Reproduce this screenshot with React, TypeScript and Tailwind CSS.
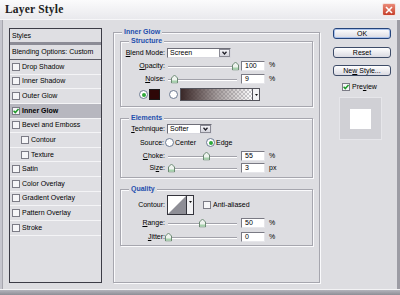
import React from 'react';

type Item = { label: string; checked?: boolean; active?: boolean; indent?: boolean };

const styleItems: Item[] = [
    { label: 'Drop Shadow' },
    { label: 'Inner Shadow' },
    { label: 'Outer Glow' },
    { label: 'Inner Glow', checked: true, active: true },
    { label: 'Bevel and Emboss' },
    { label: 'Contour', indent: true },
    { label: 'Texture', indent: true },
    { label: 'Satin' },
    { label: 'Color Overlay' },
    { label: 'Gradient Overlay' },
    { label: 'Pattern Overlay' },
    { label: 'Stroke' },
];

function Checkbox({ checked }: { checked?: boolean }) {
    return (
        <span className="w-[8px] h-[8px] shrink-0 border border-[#7c7c86] bg-[#f6f6f8] flex items-center justify-center">
            {checked && (
                <svg width="6" height="6" viewBox="0 0 6 6">
                    <path d="M0.6 2.8 L2.3 4.6 L5.5 0.9" stroke="#1f9a2a" strokeWidth="1.5" fill="none" />
                </svg>
            )}
        </span>
    );
}

function Radio({ checked }: { checked?: boolean }) {
    return (
        <span className="w-[9px] h-[9px] shrink-0 rounded-full border border-[#6c7a92] bg-white flex items-center justify-center">
            {checked && <span className="w-[4px] h-[4px] rounded-full bg-[#2fa83a]" />}
        </span>
    );
}

function Slider({ thumb }: { thumb: number }) {
    return (
        <div className="relative w-[69px] h-full shrink-0">
            <div className="absolute left-0 right-0 top-1/2 h-[1px] bg-[#a2a2aa] shadow-[0_1px_0_#ffffff]" />
            <svg
                className="absolute top-1/2 -translate-y-1/2"
                style={{ left: thumb }}
                width="7"
                height="9"
                viewBox="0 0 7 9"
            >
                <path d="M0.5 8.5 V3.5 L3.5 0.5 L6.5 3.5 V8.5 Z" fill="#eef3ee" stroke="#6d8a74" />
                <rect x="1" y="6" width="5" height="2" fill="#a6d2ac" />
            </svg>
        </div>
    );
}

function NumBox({ value }: { value: string }) {
    return (
        <div className="w-[24px] h-[10px] shrink-0 bg-white border border-[#7a7a84] border-r-[#e6e6ea] border-b-[#e6e6ea] text-[7px] leading-[8px] pl-[3px]">
            {value}
        </div>
    );
}

function Select({ text, width }: { text: string; width: string }) {
    return (
        <div className={`${width} h-[10px] shrink-0 flex bg-white border border-[#6e6e78] border-r-[#d8d8de] border-b-[#d8d8de]`}>
            <span className="flex-1 text-[7px] leading-[8px] pl-[2px]">{text}</span>
            <span className="w-[11px] h-full border border-[#8a8a94] bg-linear-to-b from-[#f4f4f8] to-[#d4d4dc] flex items-center justify-center">
                <svg width="5" height="4" viewBox="0 0 5 4">
                    <path d="M0.5 0.8 L2.5 3 L4.5 0.8" stroke="#202028" strokeWidth="1.3" fill="none" />
                </svg>
            </span>
        </div>
    );
}

function Group({ title, className, children }: { title: string; className: string; children?: React.ReactNode }) {
    return (
        <div className={`relative border border-[#a6a6ae] shadow-[inset_1px_1px_0_#fafafc,1px_1px_0_#fafafc] ${className}`}>
            <span className="absolute -top-[5px] left-[8px] px-[2px] bg-[#dddde1] text-[#1e4fae] font-bold text-[7px] leading-[8px]">
                {title}
            </span>
            {children}
        </div>
    );
}

function Label({ children, w = 'w-[44px]' }: { children: React.ReactNode; w?: string }) {
    return <span className={`${w} shrink-0 text-right text-[7px] leading-[8px]`}>{children}</span>;
}

function Button({ children, primary }: { children: React.ReactNode; primary?: boolean }) {
    return (
        <div
            className={`h-[11px] rounded-[3px] border bg-linear-to-b from-white to-[#dadae2] text-[7px] leading-[9px] text-center ${primary
                ? 'border-[#24447c] shadow-[inset_0_0_0_1px_#a9c1ea]'
                : 'border-[#3e4c68]'
                }`}
        >
            {children}
        </div>
    );
}

export default function App() {
    return (
        <div className="w-[400px] h-[295px] flex flex-col bg-[#a0a0a8] text-black font-['Liberation_Sans',Arial,sans-serif] overflow-hidden">
            {/* Title bar */}
            <div className="h-[20px] shrink-0 flex items-center justify-between bg-linear-to-b from-[#fbfbfc] to-[#e9e9ed] border-b border-[#f6f6f8]">
                <span className="pl-[5px] pt-[1px] font-['Liberation_Serif',serif] font-bold text-[11.5px] tracking-[0.2px] text-[#202020]">
                    Layer Style
                </span>
                <div className="mr-[4px] w-[14px] h-[13px] rounded-[2px] border border-[#f4e4e0] bg-linear-to-b from-[#ea8a78] to-[#c63e2a] flex items-center justify-center">
                    <svg width="8" height="8" viewBox="0 0 8 8">
                        <path d="M1 1 L7 7 M7 1 L1 7" stroke="#ffffff" strokeWidth="1.6" />
                    </svg>
                </div>
            </div>

            <div className="flex flex-1">
                <div className="w-[3px] bg-[#c6c6ce] border-r border-[#a6a6ae]" />
                <div className="flex-1 flex items-start bg-[#dddde1]">
                    {/* Styles list */}
                    <div className="ml-[6px] mt-[8px] w-[93px] h-[255px] border border-[#3c3c46] bg-[#dfdfe3] text-[7px] leading-[8px]">
                        <div className="h-[13px] flex items-center pl-[2px]">Styles</div>
                        <div className="h-[3px] bg-[#8c8c96]" />
                        <div className="h-[15px] flex items-center pl-[2px] border-b border-[#5e5e68]">Blending Options: Custom</div>
                        {styleItems.map(item => (
                            <div
                                key={item.label}
                                className={`h-[14.64px] flex items-center gap-[2px] border-b border-[#f4f4f6] ${item.indent ? 'pl-[11px]' : 'pl-[2px]'} ${item.active ? 'bg-[#b7b7bf] font-bold' : ''}`}
                            >
                                <Checkbox checked={item.checked} />
                                <span>{item.label}</span>
                            </div>
                        ))}
                    </div>

                    {/* Inner Glow group */}
                    <Group title="Inner Glow" className="ml-[11px] mt-[12px] w-[207px] h-[251px] pl-[6px] pt-[8px]">
                        <Group title="Structure" className="w-[193px] h-[66px] pt-[5px]">
                            <div className="h-[12px] flex items-center">
                                <Label><u>B</u>lend Mode:</Label>
                                <div className="ml-[2px]"><Select text="Screen" width="w-[64px]" /></div>
                            </div>
                            <div className="h-[13px] flex items-center text-[7px]">
                                <Label><u>O</u>pacity:</Label>
                                <div className="ml-[3px] h-full"><Slider thumb={64} /></div>
                                <div className="ml-[4px]"><NumBox value="100" /></div>
                                <span className="ml-[4px]">%</span>
                            </div>
                            <div className="h-[14px] flex items-center text-[7px]">
                                <Label><u>N</u>oise:</Label>
                                <div className="ml-[3px] h-full"><Slider thumb={3} /></div>
                                <div className="ml-[4px]"><NumBox value="9" /></div>
                                <span className="ml-[4px]">%</span>
                            </div>
                            <div className="h-[17px] flex items-center pl-[18px]">
                                <Radio checked />
                                <div className="ml-[1px] w-[11px] h-[11px] bg-[#2e0707] border border-[#1a1a1a]" />
                                <div className="ml-[9px]"><Radio /></div>
                                <div className="ml-[2px] w-[80px] h-[13px] flex border border-[#54545c]">
                                    <div className="flex-1 bg-[repeating-conic-gradient(#cdcdd0_0_25%,#ffffff_0_50%)] bg-[length:4px_4px]">
                                        <div className="w-full h-full bg-linear-to-r from-[#3a2828] via-[#7a6e6e]/70 to-transparent" />
                                    </div>
                                    <div className="w-[7px] bg-[#f2f2f4] border-l border-[#54545c] flex items-center justify-center">
                                        <svg width="3" height="2" viewBox="0 0 3 2">
                                            <path d="M0 0 H3 L1.5 2 Z" fill="#101010" />
                                        </svg>
                                    </div>
                                </div>
                            </div>
                        </Group>

                        <Group title="Elements" className="mt-[11px] w-[193px] h-[60px] pt-[4px]">
                            <div className="h-[12px] flex items-center">
                                <Label><u>T</u>echnique:</Label>
                                <div className="ml-[2px]"><Select text="Softer" width="w-[45px]" /></div>
                            </div>
                            <div className="h-[15px] flex items-center text-[7px] leading-[8px]">
                                <Label w="w-[43px]">Source:</Label>
                                <div className="ml-[1px]"><Radio /></div>
                                <span className="ml-[1px] w-[31px]">Center</span>
                                <Radio checked />
                                <span className="ml-[1px]">Edge</span>
                            </div>
                            <div className="h-[12px] flex items-center text-[7px]">
                                <Label><u>C</u>hoke:</Label>
                                <div className="ml-[3px] h-full"><Slider thumb={35} /></div>
                                <div className="ml-[4px]"><NumBox value="55" /></div>
                                <span className="ml-[4px]">%</span>
                            </div>
                            <div className="h-[12px] flex items-center text-[7px]">
                                <Label>Si<u>z</u>e:</Label>
                                <div className="ml-[3px] h-full"><Slider thumb={0} /></div>
                                <div className="ml-[4px]"><NumBox value="3" /></div>
                                <span className="ml-[4px]">px</span>
                            </div>
                        </Group>

                        <Group title="Quality" className="mt-[11px] w-[193px] h-[57px] pt-[4px]">
                            <div className="h-[22px] flex items-center text-[7px] leading-[8px]">
                                <Label>Contour:</Label>
                                <div className="ml-[2px] w-[27px] h-[20px] flex border border-[#34343c] bg-white">
                                    <svg className="flex-1" width="19" height="18" viewBox="0 0 19 18" preserveAspectRatio="none">
                                        <polygon points="0,18 19,0 19,18" fill="#8e8e96" />
                                    </svg>
                                    <div className="w-[7px] bg-[#f2f2f4] border-l border-[#34343c] flex items-start justify-center pt-[5px]">
                                        <svg width="3" height="2" viewBox="0 0 3 2">
                                            <path d="M0 0 H3 L1.5 2 Z" fill="#101010" />
                                        </svg>
                                    </div>
                                </div>
                                <div className="ml-[9px]"><Checkbox /></div>
                                <span className="ml-[2px]">Anti-aliased</span>
                            </div>
                            <div className="h-[14px] flex items-center text-[7px]">
                                <Label><u>R</u>ange:</Label>
                                <div className="ml-[3px] h-full"><Slider thumb={31} /></div>
                                <div className="ml-[4px]"><NumBox value="50" /></div>
                                <span className="ml-[4px]">%</span>
                            </div>
                            <div className="h-[14px] flex items-center text-[7px]">
                                <Label><u>J</u>itter:</Label>
                                <div className="ml-[3px] h-full"><Slider thumb={-3} /></div>
                                <div className="ml-[4px]"><NumBox value="0" /></div>
                                <span className="ml-[4px]">%</span>
                            </div>
                        </Group>
                    </Group>

                    {/* Buttons */}
                    <div className="ml-[13px] mt-[8px] w-[58px] flex flex-col">
                        <Button primary>OK</Button>
                        <div className="mt-[8px]"><Button>Reset</Button></div>
                        <div className="mt-[7px]"><Button>Ne<u>w</u> Style...</Button></div>
                        <div className="mt-[7px] ml-[9px] h-[8px] flex items-center gap-[2px] text-[7px] leading-[8px]">
                            <Checkbox checked />
                            <span>Pre<u>v</u>iew</span>
                        </div>
                        <div className="mt-[6px] ml-[6px] w-[43px] h-[43px] bg-[#d0d0d5] border border-[#e6e6ea] flex items-center justify-center">
                            <div className="w-[21px] h-[20px] bg-white" />
                        </div>
                    </div>
                </div>
                <div className="w-[3px] bg-[#9c9ca4]" />
            </div>
            <div className="h-[6px] shrink-0 bg-linear-to-b from-[#b4b4bc] to-[#8e8e96] border-t border-[#f2f2f4]" />
        </div>
    );
}
